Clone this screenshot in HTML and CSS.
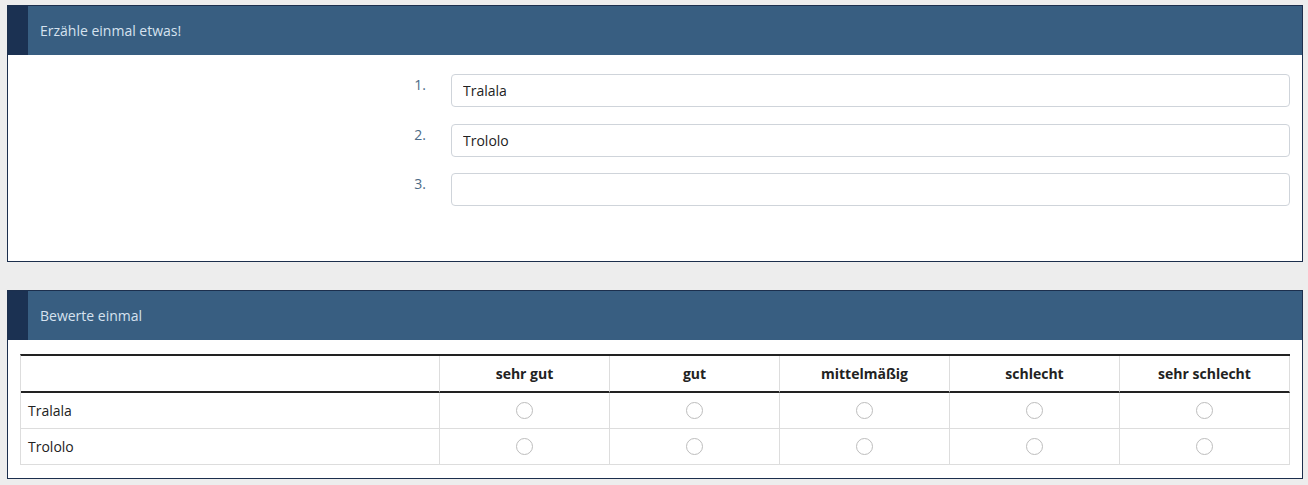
FILE: index.html
```html
<!DOCTYPE html>
<html lang="de">
<head>
<meta charset="utf-8">
<title>Umfrage</title>
<link rel="stylesheet" href="styles.css">
</head>
<body>
<div class="page">
  <section class="panel">
    <header class="panel-head">Erzähle einmal etwas!</header>
    <div class="panel-body list-body">
      <div class="list">
        <label class="num" for="f1">1.</label>
        <input class="field" id="f1" type="text" value="Tralala">
        <label class="num" for="f2">2.</label>
        <input class="field" id="f2" type="text" value="Trololo">
        <label class="num" for="f3">3.</label>
        <input class="field" id="f3" type="text" value="">
      </div>
    </div>
  </section>

  <section class="panel">
    <header class="panel-head">Bewerte einmal</header>
    <div class="panel-body table-body">
      <table class="matrix">
        <colgroup>
          <col class="c-label">
          <col class="c-opt"><col class="c-opt"><col class="c-opt"><col class="c-opt"><col class="c-opt">
        </colgroup>
        <thead>
          <tr>
            <th></th>
            <th>sehr gut</th>
            <th>gut</th>
            <th>mittelmäßig</th>
            <th>schlecht</th>
            <th>sehr schlecht</th>
          </tr>
        </thead>
        <tbody>
          <tr>
            <td class="row-label">Tralala</td>
            <td class="opt"><input class="radio" type="radio" name="r1"></td>
            <td class="opt"><input class="radio" type="radio" name="r1"></td>
            <td class="opt"><input class="radio" type="radio" name="r1"></td>
            <td class="opt"><input class="radio" type="radio" name="r1"></td>
            <td class="opt"><input class="radio" type="radio" name="r1"></td>
          </tr>
          <tr>
            <td class="row-label">Trololo</td>
            <td class="opt"><input class="radio" type="radio" name="r2"></td>
            <td class="opt"><input class="radio" type="radio" name="r2"></td>
            <td class="opt"><input class="radio" type="radio" name="r2"></td>
            <td class="opt"><input class="radio" type="radio" name="r2"></td>
            <td class="opt"><input class="radio" type="radio" name="r2"></td>
          </tr>
        </tbody>
      </table>
    </div>
  </section>
</div>
</body>
</html>
```

FILE: styles.css
```css
* { box-sizing: border-box; }

html, body {
  margin: 0;
  background: #ededed;
}

body {
  font-family: "Open Sans", "Noto Sans", sans-serif;
  font-size: 14px;
  color: #222;
}

.page {
  padding: 5px 5px 0 7px;
}

.panel {
  background: #fff;
  border: 1px solid #1c2f4d;
  margin-bottom: 28px;
}

.panel-head {
  height: 49px;
  display: flex;
  align-items: center;
  background: #385e81;
  border-left: 20px solid #1b3152;
  padding-left: 12px;
  color: #d6e2ef;
  font-size: 14px;
}

.list-body {
  padding: 19px 12px 55px;
}

.list {
  display: grid;
  grid-template-columns: 419px 1fr;
  row-gap: 16.5px;
}

.num {
  text-align: right;
  padding: 1px 13px 0 0;
  line-height: 20px;
  color: #4c6b86;
}

.field {
  margin-left: 12px;
  height: 33px;
  border: 1px solid #cfd4da;
  border-radius: 4px;
  padding: 0 11px;
  font-family: inherit;
  font-size: 14px;
  color: #222;
  background: #fff;
}

.table-body {
  padding: 14px 12px 13px;
}

.matrix {
  width: 100%;
  table-layout: fixed;
  border-collapse: separate;
  border-spacing: 0;
  border-top: 2px solid #222;
  border-left: 1px solid #ddd;
}

.c-label { width: 419px; }
.c-opt { width: 170px; }

.matrix th {
  padding: 7px 8px;
  line-height: 21px;
  font-weight: 700;
  text-align: center;
  border-bottom: 2px solid #222;
  border-right: 1px solid #ddd;
}

.matrix td {
  border-bottom: 1px solid #ddd;
  border-right: 1px solid #ddd;
}

.row-label {
  padding: 7px 7px;
  line-height: 21px;
  text-align: left;
}

.opt {
  padding: 9px 8px;
  text-align: center;
}

.radio {
  appearance: none;
  -webkit-appearance: none;
  display: block;
  width: 17px;
  height: 17px;
  margin: 0 auto;
  border: 1px solid #bdbdbd;
  border-radius: 50%;
  background: #fff;
}
```
